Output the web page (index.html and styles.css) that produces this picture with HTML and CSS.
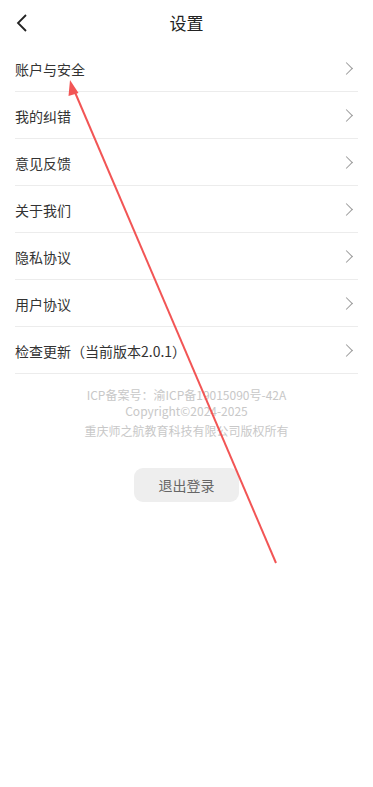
FILE: index.html
```html
<!DOCTYPE html>
<html lang="zh-CN">
<head>
  <meta charset="UTF-8" />
  <title>设置</title>
  <link rel="stylesheet" href="styles.css">
</head>
<body>
  <div class="page">
    <!-- Header -->
    <div class="header">
      <span class="back">
        <svg width="14" height="20" viewBox="0 0 14 20"><path d="M11 2 L3 10 L11 18" fill="none" stroke="#222" stroke-width="1.8"/></svg>
      </span>
      <span class="title">设置</span>
    </div>

    <!-- Menu list -->
    <div class="list">
      <div class="row"><span>账户与安全</span><i class="arrow"></i></div>
      <div class="row"><span>我的纠错</span><i class="arrow"></i></div>
      <div class="row"><span>意见反馈</span><i class="arrow"></i></div>
      <div class="row"><span>关于我们</span><i class="arrow"></i></div>
      <div class="row"><span>隐私协议</span><i class="arrow"></i></div>
      <div class="row"><span>用户协议</span><i class="arrow"></i></div>
      <div class="row"><span>检查更新（当前版本2.0.1）</span><i class="arrow"></i></div>
    </div>

    <!-- Footer info -->
    <div class="info">
      <p>ICP备案号：渝ICP备19015090号-42A</p>
      <p>Copyright©2024-2025</p>
      <p>重庆师之航教育科技有限公司版权所有</p>
    </div>

    <div class="logout-wrap">
      <button class="logout">退出登录</button>
    </div>

    <!-- annotation arrow drawn over the page -->
    <svg class="mark" width="373" height="787" viewBox="0 0 373 787">
      <line x1="276" y1="563" x2="74" y2="90" stroke="#f25555" stroke-width="2"/>
      <polygon points="70,80 78.5,93 68.5,96" fill="#f25555"/>
    </svg>
  </div>
</body>
</html>
```

FILE: styles.css
```css
html, body {
  margin: 0;
  padding: 0;
  background: #fff;
  font-family: "Noto Sans CJK SC", "Noto Sans", sans-serif;
}

.page {
  position: relative;
  width: 373px;
  height: 787px;
  overflow: hidden;
}

/* Header bar */
.header {
  height: 45px;
  display: flex;
  align-items: center;
  justify-content: center;
  position: relative;
}
.header .back {
  position: absolute;
  left: 15px;
  top: 13px;
  display: flex;
}
.header .title {
  font-size: 17px;
  color: #222;
}

/* Settings rows */
.list {
  padding: 0 15px;
}
.row {
  height: 46px;
  border-bottom: 1px solid #ececec;
  display: flex;
  align-items: center;
  justify-content: space-between;
  font-size: 14px;
  color: #333;
}
.row span {
  padding-top: 1px;
}
.arrow {
  width: 8px;
  height: 8px;
  border-top: 1.3px solid #9a9a9a;
  border-right: 1.3px solid #9a9a9a;
  transform: rotate(45deg);
  margin-right: 7px;
}

/* Footer text */
.info {
  margin-top: 13px;
  text-align: center;
  font-size: 12px;
  color: #c8c8c8;
  line-height: 16px;
}
.info p {
  margin: 0;
}
.info p:last-child {
  margin-top: 4px;
}

/* Logout */
.logout-wrap {
  display: flex;
  justify-content: center;
  margin-top: 29px;
}
.logout {
  width: 105px;
  height: 34px;
  border: none;
  border-radius: 9px;
  background: #eeeeee;
  color: #666;
  font-size: 14px;
  font-family: inherit;
  padding: 0;
}

.mark {
  position: absolute;
  left: 0;
  top: 0;
  pointer-events: none;
}
```
